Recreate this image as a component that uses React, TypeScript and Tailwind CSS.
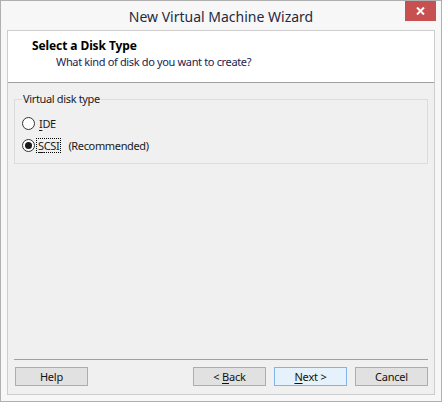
import React, { useState } from 'react';

type DiskType = 'ide' | 'scsi';

const font = { fontFamily: '"Noto Sans", "Open Sans", sans-serif' };

function Radio({ checked, onClick }: { checked: boolean; onClick: () => void }) {
  return (
    <span
      onClick={onClick}
      className="flex h-[13px] w-[13px] shrink-0 items-center justify-center rounded-full border border-[#333] bg-white"
    >
      {checked && <span className="h-[7px] w-[7px] rounded-full bg-[#1a1a1a]" />}
    </span>
  );
}

function WizardButton({ children, primary }: { children: React.ReactNode; primary?: boolean }) {
  return (
    <button
      className={`flex h-[19px] w-[73px] items-center justify-center border text-[11px] leading-none tracking-[-0.2px] text-[#111] ${
        primary ? 'border-[#7eb4ea] bg-[#e5f1fb]' : 'border-[#adadad] bg-[#e1e1e1]'
      }`}
    >
      {children}
    </button>
  );
}

export default function App() {
  const [disk, setDisk] = useState<DiskType>('scsi');

  return (
    <div
      className="flex h-[402px] w-[442px] flex-col border border-[#b0b0b0] bg-[#f7f7f7] text-[11px] tracking-[-0.35px] text-[#1a1a1a]"
      style={font}
    >
      {/* title bar */}
      <div className="relative flex h-[29px] shrink-0 items-center justify-center">
        <span className="pt-[1px] text-[14px] tracking-normal text-[#1f2b3f]">New Virtual Machine Wizard</span>
        <button className="absolute right-[5px] top-0 flex h-[20px] w-[31px] items-center justify-center bg-[#c75050]">
          <svg width="9" height="8" viewBox="0 0 9 8">
            <path d="M1 0.5 L8 7.5 M8 0.5 L1 7.5" stroke="white" strokeWidth="2" />
          </svg>
        </button>
      </div>

      {/* client area */}
      <div className="mx-[6px] mb-[6px] flex flex-1 flex-col border border-[#cdcdcd] bg-[#f0f0f0]">
        <div className="h-[52px] shrink-0 border-b border-[#a0a0a0] bg-white pl-[24px] pt-[7px]">
          <div className="text-[12px] font-bold leading-[16px] tracking-[-0.1px] text-black">Select a Disk Type</div>
          <div className="pl-[24px] leading-[16px] text-[#1b2350]">What kind of disk do you want to create?</div>
        </div>

        <fieldset className="mx-[6px] mt-[9px] h-[72px] border border-[#dcdcdc] px-[7px] pb-0">
          <legend className="px-[1px] leading-[14px]">Virtual disk type</legend>
          <div className="mt-[11px] flex h-[13px] items-center gap-[3px]">
            <Radio checked={disk === 'ide'} onClick={() => setDisk('ide')} />
            <span className="pl-[1px] leading-[14px]">
              <span className="underline underline-offset-2">I</span>DE
            </span>
          </div>
          <div className="mt-[9px] flex h-[13px] items-center gap-[1px]">
            <Radio checked={disk === 'scsi'} onClick={() => setDisk('scsi')} />
            <span className="border border-dotted border-black px-[1px] leading-[13px]">
              <span className="underline underline-offset-2">S</span>CSI
            </span>
            <span className="ml-[6px] leading-[14px]">(Recommended)</span>
          </div>
        </fieldset>

        <div className="flex-1" />

        <div className="mx-[6px] border-t border-[#a0a0a0]" />
        <div className="flex h-[34px] items-center pl-[7px] pr-[6px] pb-[1px]">
          <WizardButton>Help</WizardButton>
          <div className="flex-1" />
          <div className="flex gap-[8px]">
            <WizardButton>
              &lt;&nbsp;<span className="underline underline-offset-2">B</span>ack
            </WizardButton>
            <WizardButton primary>
              <span className="underline underline-offset-2">N</span>ext &gt;
            </WizardButton>
            <WizardButton>Cancel</WizardButton>
          </div>
        </div>
      </div>
    </div>
  );
}
